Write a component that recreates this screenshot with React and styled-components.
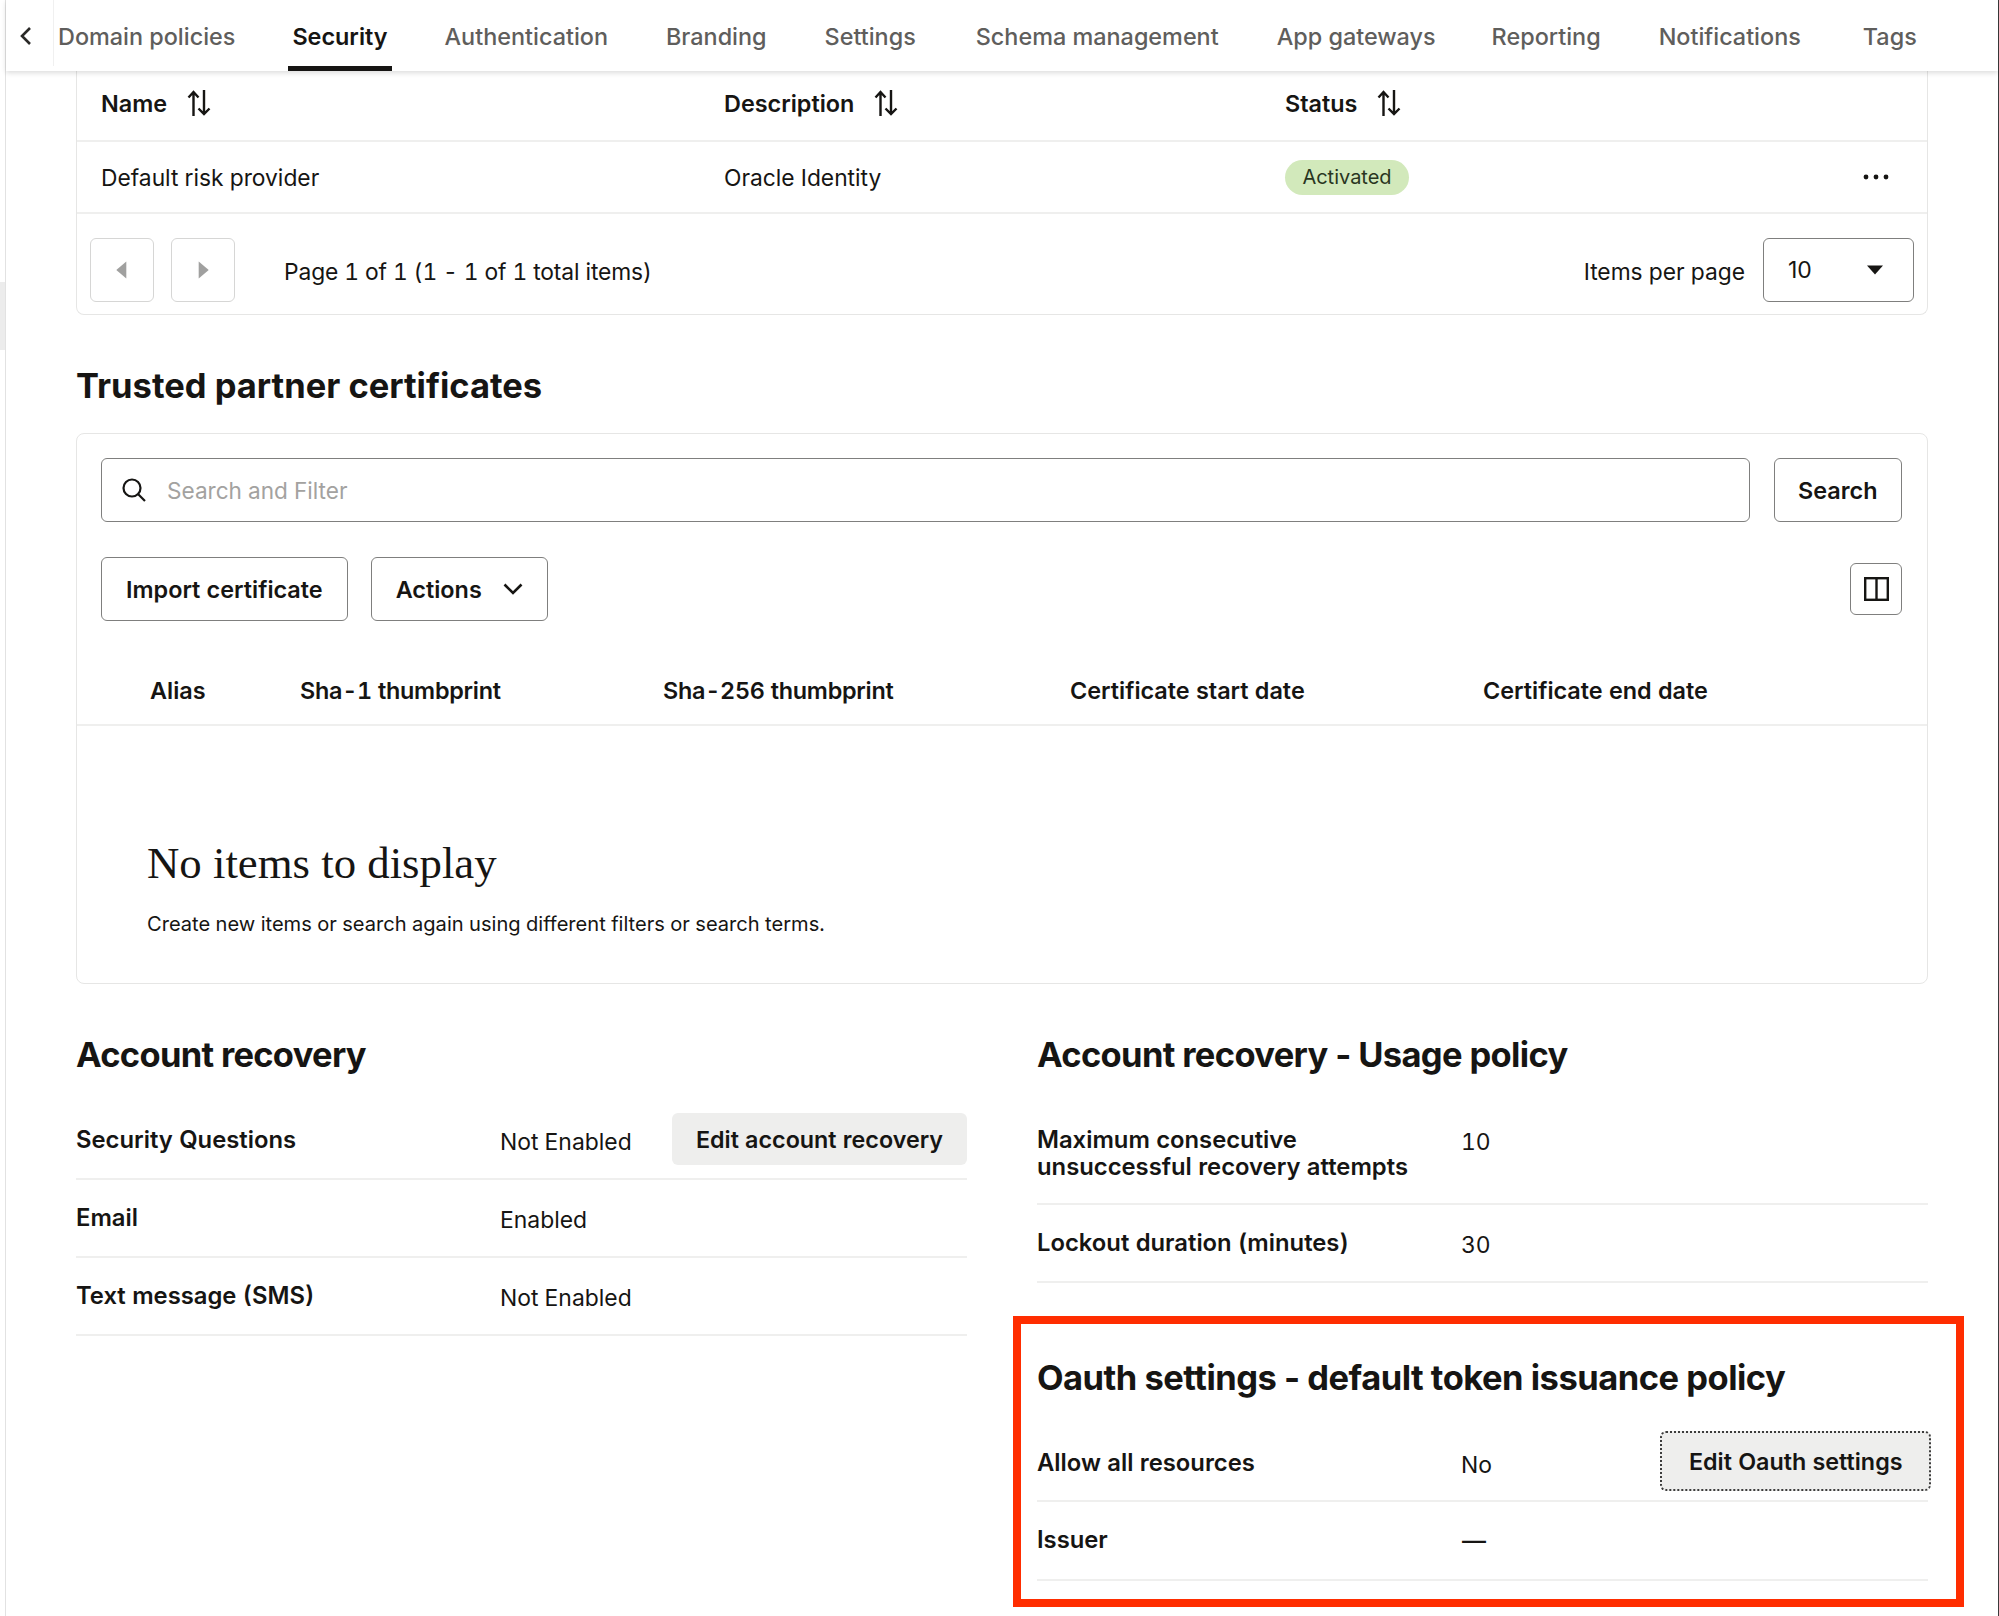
import React from "react";
import styled, { createGlobalStyle } from "styled-components";

const Global = createGlobalStyle`
  html, body { margin: 0; padding: 0; background: #fff; }
  * { box-sizing: border-box; }
  body {
    font-family: Inter, "Liberation Sans", sans-serif;
    color: #161513;
    font-feature-settings: "tnum" 1;
  }
`;

const Page = styled.div`
  width: 1999px;
  height: 1616px;
  overflow: hidden;
  display: flex;
  background: #fff;
`;
const Gutter = styled.div`
  width: 5px;
  flex: none;
  padding-top: 282px;
`;
const GutterHandle = styled.div`
  height: 68px;
  background: #ececec;
`;
const Shell = styled.div`
  flex: 1;
  min-width: 0;
  border-left: 1px solid #e2e2e2;
  border-right: 1px solid #3a3a3a;
`;
const TabBar = styled.div`
  height: 71px;
  display: flex;
  box-shadow: 0 2px 5px rgba(0, 0, 0, 0.14);
  position: relative;
  z-index: 2;
  background: #fff;
`;
const BackButton = styled.div`
  width: 48px;
  height: 66px;
  flex: none;
  display: flex;
  align-items: center;
  justify-content: center;
  border-right: 1px solid #f0f0f0;
  padding: 6px 8px 0 0;
`;
const TabList = styled.div`
  display: flex;
  gap: 49px;
`;
const Tab = styled.div`
  height: 71px;
  padding: 18px 4px 0;
  margin-left: ${(p) => p.$nudge || 0}px;
  font-size: 23.4px;
  line-height: 37px;
  font-weight: ${(p) => (p.$active ? 600 : 500)};
  color: ${(p) => (p.$active ? "#161513" : "#5f5e5c")};
  border-bottom: 5px solid ${(p) => (p.$active ? "#161513" : "transparent")};
  white-space: nowrap;
  font-feature-settings: normal;
`;
const Content = styled.div`
  padding: 0 70px;
`;
const Card = styled.div`
  border: 1px solid #e6e6e5;
  border-radius: 8px;
  background: #fff;
`;
const TopCard = styled(Card)`
  border-top: none;
  border-radius: 0 0 8px 8px;
`;
const RiskRow = styled.div`
  display: grid;
  grid-template-columns: 623px 561px 1fr auto;
  align-items: center;
  padding: 0 38px ${(p) => p.$pb || 0}px 24px;
  height: ${(p) => p.$h}px;
  border-bottom: 2px solid #efefee;
  font-size: 22.8px;
`;
const HeadCell = styled.div`
  display: flex;
  align-items: center;
  gap: 20px;
  font-size: 23.4px;
  font-weight: 600;
`;
const StatusPill = styled.div`
  width: 124px;
  height: 35px;
  border-radius: 18px;
  background: #d2e9bb;
  color: #29361f;
  font-size: 20px;
  display: flex;
  align-items: center;
  justify-content: center;
`;
const Pagination = styled.div`
  height: 100px;
  display: flex;
  align-items: flex-start;
  padding: 24px 13px 0;
`;
const PageButton = styled.div`
  width: 64px;
  height: 64px;
  border: 1.5px solid #d6d6d5;
  border-radius: 6px;
  margin-right: 17px;
  display: flex;
  align-items: center;
  justify-content: center;
`;
const PageInfo = styled.div`
  margin-left: 32px;
  font-size: 22.8px;
  letter-spacing: -0.1px;
  line-height: 67px;
  flex: 1;
`;
const PerPage = styled.div`
  font-size: 22.8px;
  line-height: 67px;
  margin-right: 18px;
`;
const PageSelect = styled.div`
  width: 151px;
  height: 64px;
  border: 1.5px solid #7f7f7e;
  border-radius: 6px;
  padding: 0 30px 0 24px;
  font-size: 23px;
  font-feature-settings: normal;
  display: flex;
  align-items: center;
  justify-content: space-between;
`;
const SectionTitle = styled.h2`
  margin: ${(p) => p.$top || 0}px 0 ${(p) => p.$bottom || 0}px;
  font-size: 34.5px;
  line-height: 40px;
  font-weight: 700;
  letter-spacing: ${(p) => p.$tracking}px;
  color: #161513;
  white-space: nowrap;
  font-feature-settings: normal;
`;
const CertCard = styled(Card)`
  height: 551px;
`;
const CertControls = styled.div`
  padding: 24px 25px 0 24px;
`;
const SearchRow = styled.div`
  display: flex;
  gap: 24px;
`;
const SearchField = styled.div`
  flex: 1;
  height: 64px;
  border: 1.5px solid #7f7f7e;
  border-radius: 6px;
  display: flex;
  align-items: center;
  gap: 20px;
  padding-left: 19px;
  color: #a3a2a0;
  font-size: 22.6px;
`;
const OutlineButton = styled.div`
  height: 64px;
  padding: 0 ${(p) => p.$px || 24}px;
  border: 1.5px solid #7f7f7e;
  border-radius: 6px;
  font-size: 23.4px;
  font-weight: 600;
  display: flex;
  align-items: center;
  gap: ${(p) => p.$gap || 0}px;
  white-space: nowrap;
`;
const Toolbar = styled.div`
  display: flex;
  align-items: center;
  gap: 23px;
  margin-top: 35px;
`;
const IconButton = styled.div`
  width: 52px;
  height: 52px;
  margin-left: auto;
  border: 1.5px solid #7f7f7e;
  border-radius: 6px;
  display: flex;
  align-items: center;
  justify-content: center;
`;
const CertHead = styled.div`
  display: grid;
  grid-template-columns: 150px 363px 407px 413px 1fr;
  padding: 54px 0 17px 73px;
  border-bottom: 2px solid #efefee;
  font-size: 23.4px;
  line-height: 32px;
  font-weight: 600;
`;
const ThumbprintCell = styled.div`
  letter-spacing: -0.26px;
`;
const Empty = styled.div`
  padding: 113px 0 0 70px;
`;
const EmptyTitle = styled.div`
  font-family: "Liberation Serif", "DejaVu Serif", serif;
  font-size: 44.8px;
  line-height: 48px;
  color: #161513;
`;
const EmptyText = styled.div`
  margin-top: 23px;
  font-size: 20.1px;
  line-height: 28px;
`;
const Columns = styled.div`
  display: grid;
  grid-template-columns: 891px 891px;
  gap: 70px;
  margin-top: 51px;
`;
const Column = styled.div``;
const DetailRow = styled.div`
  display: grid;
  grid-template-columns: 424px 1fr auto;
  min-height: ${(p) => p.$min || 78}px;
  border-bottom: 2px solid #efefee;
  padding-bottom: ${(p) => p.$pb || 0}px;
`;
const DetailLabel = styled.div`
  padding-top: 24px;
  font-size: 23.8px;
  line-height: 27px;
  font-weight: 600;
  color: #161513;
  white-space: nowrap;
`;
const DetailValue = styled.div`
  padding-top: 24px;
  font-size: 22.9px;
  line-height: 32px;
`;
const DashValue = styled.div`
  padding-top: 23px;
  font-size: 24px;
  line-height: 32px;
  font-weight: 500;
  padding-left: 1px;
`;
const FilledButton = styled.div`
  height: ${(p) => p.$h}px;
  margin-top: ${(p) => p.$mt}px;
  margin-right: ${(p) => p.$mr || 0}px;
  padding: 0 ${(p) => p.$px}px;
  background: #eeeeed;
  border-radius: 6px;
  font-size: 23.3px;
  font-weight: 600;
  display: flex;
  align-items: center;
  justify-content: center;
  white-space: nowrap;
  border: ${(p) => (p.$focus ? "2px dotted #3c3c3c" : "none")};
`;
const AnnotationFrame = styled.div`
  margin: 33px -36px 0 -24px;
  border: 8px solid #ff2d00;
  padding: 34px 28px 18px 16px;
`;

const SortIcon = () => (
  <svg width="24" height="26" viewBox="0 0 24 26" fill="none" stroke="#161513" strokeWidth="2.4">
    <path d="M6.5 26V2M1.5 7.5l5-5.5 5 5.5" />
    <path d="M17 0v24M11.5 18.5l5.5 5.5 5.5-5.5" />
  </svg>
);
const Triangle = ({ d, size = 14, fill }) => (
  <svg width={size} height={size} viewBox="0 0 14 14" fill={fill}>
    <path d={d} />
  </svg>
);

const TABS = [
  { label: "Domain policies" },
  { label: "Security", active: true },
  { label: "Authentication" },
  { label: "Branding", nudge: 1 },
  { label: "Settings", nudge: 1 },
  { label: "Schema management", nudge: 3 },
  { label: "App gateways", nudge: 1 },
  { label: "Reporting", nudge: -1 },
  { label: "Notifications", nudge: 1 },
  { label: "Tags", nudge: 5 },
];

function Header() {
  return (
    <TabBar>
      <BackButton>
        <svg width="14" height="20" viewBox="0 0 14 20" fill="none" stroke="#2a2927" strokeWidth="2.6">
          <path d="M11 2L3 10l8 8" />
        </svg>
      </BackButton>
      <TabList>
        {TABS.map((t) => (
          <Tab key={t.label} $active={t.active} $nudge={t.nudge}>{t.label}</Tab>
        ))}
      </TabList>
    </TabBar>
  );
}

function RiskTable() {
  return (
    <TopCard>
      <RiskRow $h={71} $pb={5}>
        <HeadCell>Name <SortIcon /></HeadCell>
        <HeadCell>Description <SortIcon /></HeadCell>
        <HeadCell>Status <SortIcon /></HeadCell>
        <div />
      </RiskRow>
      <RiskRow $h={72}>
        <div>Default risk provider</div>
        <div>Oracle Identity</div>
        <StatusPill>Activated</StatusPill>
        <svg width="26" height="6" viewBox="0 0 26 6" fill="#161513">
          <circle cx="3" cy="3" r="2.4" /><circle cx="13" cy="3" r="2.4" /><circle cx="23" cy="3" r="2.4" />
        </svg>
      </RiskRow>
      <Pagination>
        <PageButton><Triangle size={20} d="M10 1v12L3 7z" fill="#a0a09f" /></PageButton>
        <PageButton><Triangle size={20} d="M4 1v12l7-6z" fill="#a0a09f" /></PageButton>
        <PageInfo>Page 1 of 1 (1 - 1 of 1 total items)</PageInfo>
        <PerPage>Items per page</PerPage>
        <PageSelect>
          <span>10</span>
          <Triangle size={16} d="M0 3h14L7 11z" fill="#161513" />
        </PageSelect>
      </Pagination>
    </TopCard>
  );
}

function CertPanel() {
  return (
    <CertCard>
      <CertControls>
        <SearchRow>
          <SearchField>
            <svg width="26" height="26" viewBox="0 0 26 26" fill="none" stroke="#161513" strokeWidth="2.2">
              <circle cx="11" cy="11" r="8.5" />
              <path d="M17 17l7 7" />
            </svg>
            Search and Filter
          </SearchField>
          <OutlineButton $px={23.5}>Search</OutlineButton>
        </SearchRow>
        <Toolbar>
          <OutlineButton>Import certificate</OutlineButton>
          <OutlineButton $gap={21}>
            Actions
            <svg width="20" height="12" viewBox="0 0 20 12" fill="none" stroke="#161513" strokeWidth="2.6">
              <path d="M1.5 1.5L10 10l8.5-8.5" />
            </svg>
          </OutlineButton>
          <IconButton>
            <svg width="25" height="24" viewBox="0 0 25 24" fill="none" stroke="#161513" strokeWidth="2.4">
              <rect x="1.2" y="1.2" width="22.6" height="21.6" />
              <path d="M12.5 1v22" />
            </svg>
          </IconButton>
        </Toolbar>
      </CertControls>
      <CertHead>
        <div>Alias</div>
        <ThumbprintCell>Sha-1 thumbprint</ThumbprintCell>
        <ThumbprintCell>Sha-256 thumbprint</ThumbprintCell>
        <div>Certificate start date</div>
        <div>Certificate end date</div>
      </CertHead>
      <Empty>
        <EmptyTitle>No items to display</EmptyTitle>
        <EmptyText>Create new items or search again using different filters or search terms.</EmptyText>
      </Empty>
    </CertCard>
  );
}

export default function App() {
  return (
    <Page>
      <Global />
      <Gutter><GutterHandle /></Gutter>
      <Shell>
        <Header />
        <Content>
          <RiskTable />
          <SectionTitle $top={51} $bottom={27} $tracking={0}>Trusted partner certificates</SectionTitle>
          <CertPanel />
          <Columns>
            <Column>
              <SectionTitle $bottom={27} $tracking={-0.7}>Account recovery</SectionTitle>
              <DetailRow>
                <DetailLabel>Security Questions</DetailLabel>
                <DetailValue>Not Enabled</DetailValue>
                <FilledButton $h={52} $mt={11} $px={24}>Edit account recovery</FilledButton>
              </DetailRow>
              <DetailRow>
                <DetailLabel>Email</DetailLabel>
                <DetailValue>Enabled</DetailValue>
              </DetailRow>
              <DetailRow>
                <DetailLabel>Text message (SMS)</DetailLabel>
                <DetailValue>Not Enabled</DetailValue>
              </DetailRow>
            </Column>
            <Column>
              <SectionTitle $bottom={27} $tracking={-0.65}>Account recovery - Usage policy</SectionTitle>
              <DetailRow $pb={23}>
                <DetailLabel>Maximum consecutive<br />unsuccessful recovery attempts</DetailLabel>
                <DetailValue>10</DetailValue>
              </DetailRow>
              <DetailRow>
                <DetailLabel>Lockout duration (minutes)</DetailLabel>
                <DetailValue>30</DetailValue>
              </DetailRow>
              <AnnotationFrame>
                <SectionTitle $bottom={27} $tracking={-0.5}>Oauth settings - default token issuance policy</SectionTitle>
                <DetailRow $min={77}>
                  <DetailLabel>Allow all resources</DetailLabel>
                  <DetailValue>No</DetailValue>
                  <FilledButton $h={60} $mt={6} $mr={-3} $px={26.5} $focus>Edit Oauth settings</FilledButton>
                </DetailRow>
                <DetailRow $min={79}>
                  <DetailLabel>Issuer</DetailLabel>
                  <DashValue>—</DashValue>
                </DetailRow>
              </AnnotationFrame>
            </Column>
          </Columns>
        </Content>
      </Shell>
    </Page>
  );
}
